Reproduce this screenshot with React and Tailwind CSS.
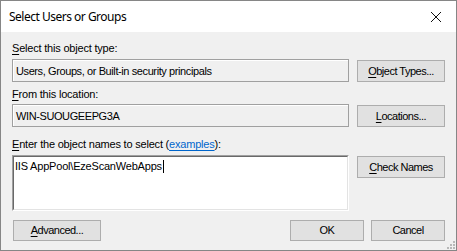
import React from "react";

const ui = { fontFamily: '"Liberation Sans", Arial, sans-serif' };

function Key({ children }) {
    return <span className="underline underline-offset-[2px]">{children}</span>;
}

function Btn({ children, className = "" }) {
    return (
        <div
            className={
                "flex items-center justify-center bg-[#e1e1e1] border border-[#adadad] text-[11px] text-black tracking-[-0.5px] " +
                className
            }
        >
            {children}
        </div>
    );
}

function ReadOnlyBox({ children }) {
    return (
        <div className="flex-1 h-[23px] border border-[#a0a0a0] bg-[#f0f0f0] flex items-center">
            <div className="w-full h-full border-t border-l border-white flex items-center pl-[2px] text-[11px] text-black tracking-[-0.4px]">
                {children}
            </div>
        </div>
    );
}

export default function App() {
    return (
        <div
            className="w-[457px] h-[251px] border border-[#868686] bg-[#f0f0f0] flex flex-col relative tracking-[-0.2px]"
            style={ui}
        >
            {/* title bar */}
            <div className="h-[31px] bg-white flex items-center justify-between pl-[8px] pr-[9px] shrink-0">
                <span
                    className="text-[12px] text-black tracking-[-0.5px]"
                    style={{ fontFamily: '"Noto Sans", sans-serif' }}
                >
                    Select Users or Groups
                </span>
                <svg width="12" height="12" viewBox="0 0 12 12" className="mr-[5px]">
                    <path d="M1 1 L11 11 M11 1 L1 11" stroke="#111" strokeWidth="1" />
                </svg>
            </div>

            <div className="flex flex-col px-[11px] text-[11px] text-black leading-[13px]">
                <div className="mt-[10px] h-[13px]">
                    <Key>S</Key>elect this object type:
                </div>
                <div className="mt-[4px] flex gap-[8px]">
                    <ReadOnlyBox>Users, Groups, or Built-in security principals</ReadOnlyBox>
                    <Btn className="w-[88px] h-[22px] mt-[1px]">
                        <Key>O</Key>bject Types...
                    </Btn>
                </div>

                <div className="mt-[6px] h-[13px]">
                    <Key>F</Key>rom this location:
                </div>
                <div className="mt-[3px] flex gap-[8px]">
                    <ReadOnlyBox>WIN-SUOUGEEPG3A</ReadOnlyBox>
                    <Btn className="w-[88px] h-[22px] mt-[1px]">
                        <Key>L</Key>ocations...
                    </Btn>
                </div>

                <div className="mt-[11px] h-[13px]">
                    <Key>E</Key>nter the object names to select (
                    <span className="text-[#0066cc] underline underline-offset-[2px]">examples</span>):
                </div>
                <div className="mt-[4px] flex gap-[8px] items-start">
                    <div className="flex-1 h-[56px] border-t border-l border-[#a0a0a0] border-b border-r border-b-white border-r-white">
                        <div className="w-full h-full bg-white border-t border-l border-[#696969] border-b border-r border-b-[#e3e3e3] border-r-[#e3e3e3] pl-[1px] pt-[3px]">
                            <span>IIS AppPool\EzeScanWebApps</span>
                            <span className="inline-block w-px h-[13px] bg-black align-top ml-[1px]" />
                        </div>
                    </div>
                    <Btn className="w-[88px] h-[22px] mt-[1px]">
                        <Key>C</Key>heck Names
                    </Btn>
                </div>

                <div className="mt-[9px] flex items-center">
                    <Btn className="w-[88px] h-[21px] ml-[1px]">
                        <Key>A</Key>dvanced...
                    </Btn>
                    <div className="flex-1" />
                    <Btn className="w-[74px] h-[21px]">OK</Btn>
                    <Btn className="w-[74px] h-[21px] ml-[7px]">Cancel</Btn>
                </div>
            </div>

            {/* size grip */}
            <svg width="8" height="8" viewBox="0 0 8 8" className="absolute right-[1px] bottom-[1px]">
                <rect x="6" y="0" width="2" height="2" fill="#b8b8b8" />
                <rect x="3" y="3" width="2" height="2" fill="#b8b8b8" />
                <rect x="6" y="3" width="2" height="2" fill="#b8b8b8" />
                <rect x="0" y="6" width="2" height="2" fill="#b8b8b8" />
                <rect x="3" y="6" width="2" height="2" fill="#b8b8b8" />
                <rect x="6" y="6" width="2" height="2" fill="#b8b8b8" />
            </svg>
        </div>
    );
}
